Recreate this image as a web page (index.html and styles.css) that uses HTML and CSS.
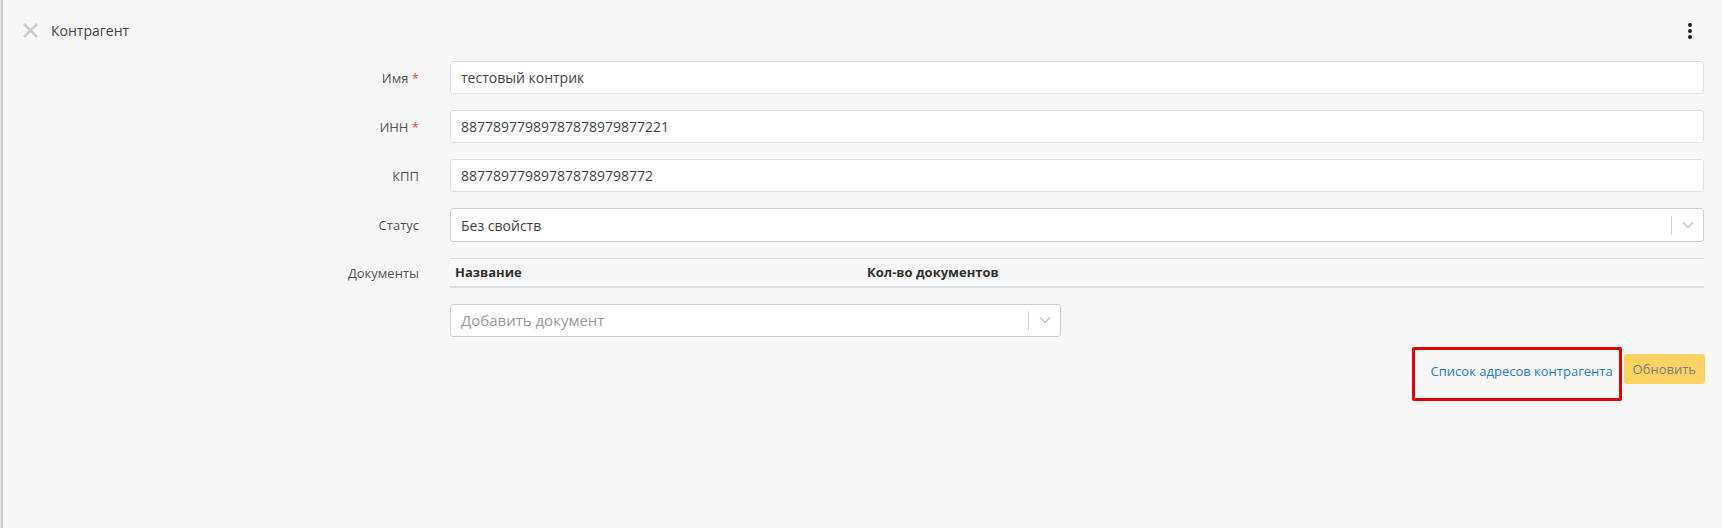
FILE: index.html
```html
<!DOCTYPE html>
<html lang="ru">
<head>
    <meta charset="UTF-8">
    <meta name="viewport" content="width=device-width, initial-scale=1.0">
    <title>Контрагент</title>
    <link rel="stylesheet" href="styles.css">
</head>
<body>

<div class="page">
    <!-- Шапка карточки -->
    <header class="topbar">
        <button class="close-btn" title="Закрыть">
            <svg width="15" height="15" viewBox="0 0 15 15">
                <path d="M1 1L14 14M14 1L1 14" stroke="#cdcdcd" stroke-width="2.6" fill="none"/>
            </svg>
        </button>
        <span class="title">Контрагент</span>
        <button class="menu-btn" title="Меню">
            <span></span><span></span><span></span>
        </button>
    </header>

    <!-- Форма -->
    <form class="form">
        <label class="form-label">Имя <span class="req">*</span></label>
        <input class="text-input" type="text" value="тестовый контрик">

        <label class="form-label">ИНН <span class="req">*</span></label>
        <input class="text-input" type="text" value="88778977989787878979877221">

        <label class="form-label">КПП</label>
        <input class="text-input" type="text" value="887789779897878789798772">

        <label class="form-label">Статус</label>
        <div class="select">
            <span class="select-value">Без свойств</span>
            <span class="select-sep"></span>
            <span class="select-arrow">
                <svg width="12" height="8" viewBox="0 0 12 8">
                    <path d="M1 1.5L6 6.5L11 1.5" stroke="#c4c4c4" stroke-width="1.5" fill="none"/>
                </svg>
            </span>
        </div>

        <label class="form-label form-label-top">Документы</label>
        <div class="docs">
            <table class="docs-table">
                <thead>
                    <tr>
                        <th class="col-name">Название</th>
                        <th>Кол-во документов</th>
                    </tr>
                </thead>
            </table>
            <div class="select select-add">
                <span class="select-placeholder">Добавить документ</span>
                <span class="select-sep"></span>
                <span class="select-arrow">
                    <svg width="12" height="8" viewBox="0 0 12 8">
                        <path d="M1 1.5L6 6.5L11 1.5" stroke="#c4c4c4" stroke-width="1.5" fill="none"/>
                    </svg>
                </span>
            </div>
        </div>
    </form>

    <div class="actions">
        <div class="highlight">
            <a class="link" href="#">Список адресов контрагента</a>
        </div>
        <button class="btn-update" disabled>Обновить</button>
    </div>
</div>

</body>
</html>
```

FILE: styles.css
```css
* {
    margin: 0;
    padding: 0;
    box-sizing: border-box;
}

body {
    font-family: "Open Sans", "Liberation Sans", sans-serif;
    background-color: #f7f7f7;
    color: #333;
    height: 528px;
    overflow: hidden;
    border-left: 1px solid #e6e6e6;
}

.page {
    border-left: 2px solid #cbcbcb;
    height: 100%;
}

/* Шапка */
.topbar {
    display: flex;
    align-items: center;
    height: 61px;
    padding: 0 28px 0 20px;
}

.close-btn {
    display: flex;
    background: none;
    border: none;
    cursor: pointer;
    margin-right: 13px;
}

.title {
    font-size: 14px;
    color: #444;
    flex: 1;
}

.menu-btn {
    display: flex;
    flex-direction: column;
    gap: 2px;
    background: none;
    border: none;
    cursor: pointer;
    padding: 0 2px;
}

.menu-btn span {
    width: 4px;
    height: 4px;
    border-radius: 50%;
    background-color: #222;
}

/* Форма */
.form {
    display: grid;
    grid-template-columns: 416px 1fr;
    column-gap: 31px;
    row-gap: 16px;
    padding-right: 18px;
}

.form-label {
    align-self: center;
    text-align: right;
    font-size: 13px;
    color: #555;
}

.form-label-top {
    align-self: start;
    line-height: 30px;
}

.req {
    color: #e04848;
}

.text-input {
    height: 33px;
    width: 100%;
    padding: 0 10px;
    font-family: inherit;
    font-size: 14px;
    color: #444;
    background-color: #fff;
    border: 1px solid #e0e0e0;
    border-radius: 3px;
    outline: none;
}

.select {
    display: flex;
    align-items: center;
    height: 34px;
    padding-left: 10px;
    background-color: #fff;
    border: 1px solid #cfcfcf;
    border-radius: 3px;
    font-size: 14px;
    color: #444;
}

.select-value,
.select-placeholder {
    flex: 1;
}

.select-placeholder {
    font-size: 15px;
    color: #999;
}

.select-sep {
    width: 1px;
    height: 19px;
    background-color: #cfcfcf;
}

.select-arrow {
    display: flex;
    justify-content: center;
    width: 31px;
}

/* Документы */
.docs-table {
    width: 100%;
    border-collapse: collapse;
    border-top: 1px solid #dedede;
    border-bottom: 2px solid #dcdfe4;
}

.docs-table th {
    height: 28px;
    padding: 0 5px;
    text-align: left;
    font-size: 13px;
    font-weight: bold;
    color: #333;
}

.docs-table .col-name {
    width: 412px;
}

.select-add {
    width: 611px;
    height: 33px;
    margin-top: 16px;
}

/* Кнопки внизу */
.actions {
    display: flex;
    justify-content: flex-end;
    align-items: flex-start;
    padding-right: 17px;
    margin-top: 10px;
}

.highlight {
    width: 210px;
    height: 54px;
    padding: 9px 5px 0 16px;
    border: 3px solid #e00000;
    border-radius: 2px;
}

.link {
    font-size: 13px;
    line-height: 24px;
    color: #2b7bcf;
    text-decoration: none;
}

.btn-update {
    height: 30px;
    margin: 7px 0 0 2px;
    padding: 0 9px;
    font-family: inherit;
    font-size: 13px;
    color: #7d7d7d;
    background-color: #fdd264;
    border: none;
    border-radius: 3px;
}
```
